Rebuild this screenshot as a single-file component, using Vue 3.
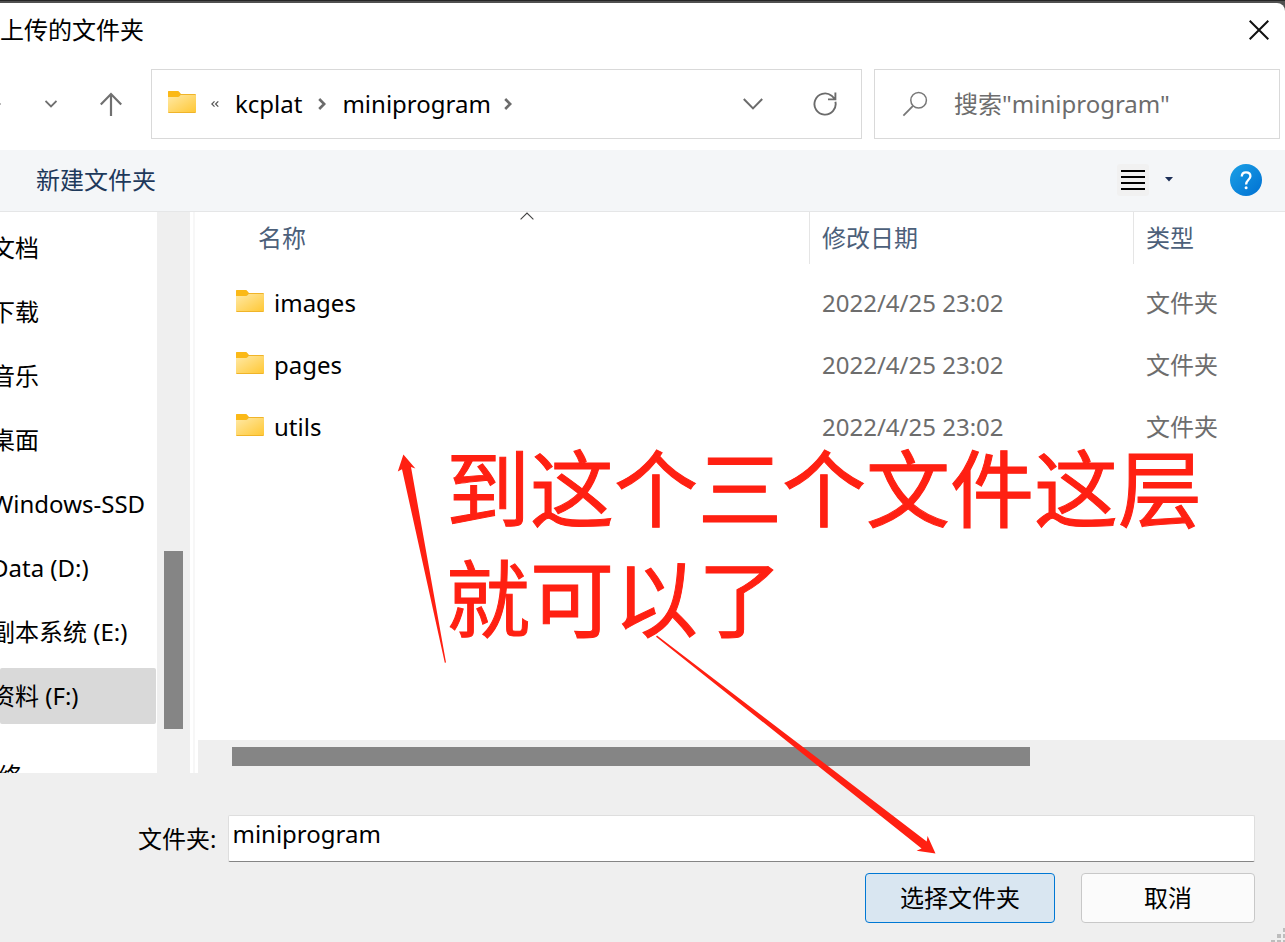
<script setup>
import { ref } from 'vue'

const places = [
  { name: '文档' },
  { name: '下载' },
  { name: '音乐' },
  { name: '桌面' },
  { name: 'Windows-SSD' },
  { name: 'Data (D:)' },
  { name: '副本系统 (E:)' },
  { name: '资料 (F:)', selected: true },
  { name: '网络', root: true },
]

const files = [
  { name: 'images', date: '2022/4/25 23:02', type: '文件夹' },
  { name: 'pages', date: '2022/4/25 23:02', type: '文件夹' },
  { name: 'utils', date: '2022/4/25 23:02', type: '文件夹' },
]

const treeScroll = { start: 60.4, size: 31.8 }
const listScroll = { start: 3.1, size: 73.4 }

const folder = ref('miniprogram')
const query = ref('')
</script>

<template>
  <div class="screen">
    <svg class="defs" width="0" height="0" aria-hidden="true">
      <defs>
        <linearGradient id="folderFill" x1="0" y1="0" x2="1" y2="1">
          <stop offset="0" stop-color="#ffe9a6" />
          <stop offset="1" stop-color="#ffc836" />
        </linearGradient>
        <linearGradient id="helpFill" x1="0" y1="0" x2="1" y2="1">
          <stop offset="0" stop-color="#1ba1e6" />
          <stop offset="1" stop-color="#0070d2" />
        </linearGradient>
        <symbol id="folder" viewBox="0 0 28 22">
          <path d="M0 1.2Q0 0 1.2 0H9Q10 0 10.8 .8L13 3H27Q28 3 28 4V21Q28 22 27 22H1Q0 22 0 21Z" fill="#f0b429" />
          <path d="M0 1.2Q0 0 1.2 0H9.5Q10.4 0 11 .8L12.4 3L11 5.2Q10.4 6 9.5 6H0Z" fill="#fbb917" />
          <path d="M0 6H9.8Q11 6 11.8 5L12.6 4H27.4Q28 4 28 4.6V20.4Q28 21 27.4 21H.6Q0 21 0 20.4Z" fill="url(#folderFill)" />
        </symbol>
      </defs>
    </svg>

    <main class="dialog">
      <header class="titlebar">
        <h1>上传的文件夹</h1>
        <button class="plain" aria-label="关闭">
          <svg width="20" height="20" viewBox="0 0 20 20"><path d="M.7 .7L19.3 19.3M19.3 .7L.7 19.3" stroke="#111" stroke-width="2" fill="none" /></svg>
        </button>
      </header>

      <div class="navbar">
        <nav class="history">
          <button class="plain" aria-label="前进">
            <svg width="2" height="2" viewBox="0 0 2 2"><path d="M0 0H1V2H0Z" fill="#bbb" /></svg>
          </button>
          <button class="plain" aria-label="最近位置">
            <svg width="12" height="8" viewBox="0 0 12 8"><path d="M.5 1L6 6.5L11.5 1" stroke="#707070" stroke-width="1.8" fill="none" /></svg>
          </button>
          <button class="plain" aria-label="上一级">
            <svg width="22" height="24" viewBox="0 0 22 24"><path d="M11 24V2M.8 12.6L11 2L21.2 12.6" stroke="#707070" stroke-width="2.2" fill="none" /></svg>
          </button>
        </nav>
        <div class="address">
          <svg class="folder" width="28" height="22"><use href="#folder" /></svg>
          <svg class="more" width="8" height="6" viewBox="0 0 8 6"><path d="M3.5 .4L.8 3L3.5 5.6M7.3 .4L4.6 3L7.3 5.6" stroke="#555" stroke-width="1.2" fill="none" /></svg>
          <a href="#kcplat">kcplat</a>
          <svg class="sep" width="8" height="12" viewBox="0 0 8 12"><path d="M1.2 1L6.2 6L1.2 11" stroke="#6b6b6b" stroke-width="2.6" fill="none" /></svg>
          <a href="#miniprogram">miniprogram</a>
          <svg class="sep last" width="8" height="12" viewBox="0 0 8 12"><path d="M1.2 1L6.2 6L1.2 11" stroke="#6b6b6b" stroke-width="2.6" fill="none" /></svg>
          <div class="address-actions">
            <button class="plain" aria-label="以前的位置">
              <svg width="20" height="12" viewBox="0 0 20 12"><path d="M.8 1L10 10.4L19.2 1" stroke="#6b6b6b" stroke-width="2" fill="none" /></svg>
            </button>
            <button class="plain" aria-label="刷新">
              <svg width="24" height="24" viewBox="0 0 24 24"><path d="M22.4 9.7A10.6 10.6 0 1 1 18.6 3.7L22 7.2M22.4 .6V7.4H15" stroke="#6b6b6b" stroke-width="1.9" fill="none" /></svg>
            </button>
          </div>
        </div>
        <label class="search">
          <svg width="26" height="26" viewBox="0 0 26 26"><circle cx="16.6" cy="9.2" r="7.8" stroke="#777" stroke-width="1.5" fill="none" /><path d="M11 14.8L1.4 24.6" stroke="#777" stroke-width="1.8" /></svg>
          <input v-model="query" type="search" aria-label="搜索" placeholder="搜索&quot;miniprogram&quot;" />
        </label>
      </div>

      <div class="toolbar">
        <button class="plain new-folder">新建文件夹</button>
        <div class="view-tools">
          <button class="plain view" aria-label="视图">
            <svg width="32" height="32" viewBox="0 0 32 32"><rect width="32" height="32" rx="3" fill="#f1f1f1" /><path d="M4 7H28M4 13H28M4 19H28M4 25H28" stroke="#000" stroke-width="2" /></svg>
          </button>
          <button class="plain view-menu" aria-label="更多选项">
            <svg width="8" height="5" viewBox="0 0 8 5"><path d="M0 0H8L4 4.6Z" fill="#1c2f57" /></svg>
          </button>
          <button class="plain" aria-label="帮助">
            <svg width="32" height="32" viewBox="0 0 32 32"><circle cx="16" cy="16" r="16" fill="url(#helpFill)" /><path d="M11.8 12.6C11.8 9.6 13.6 8.4 16 8.4C18.5 8.4 20.4 9.9 20.4 12.3C20.4 15.6 16.1 16 16.1 20.4" stroke="#fff" stroke-width="2.3" fill="none" /><circle cx="16.1" cy="23.7" r="1.5" fill="#fff" /></svg>
          </button>
        </div>
      </div>

      <div class="content">
        <aside class="tree">
          <ul>
            <li v-for="p in places" :key="p.name" :class="{ selected: p.selected, root: p.root }">
              <a :href="'#' + p.name">{{ p.name }}</a>
            </li>
          </ul>
        </aside>
        <div class="track vertical">
          <div class="thumb" :style="{ top: treeScroll.start + '%', height: treeScroll.size + '%' }"></div>
        </div>
        <div class="splitter"></div>
        <section class="list">
          <table>
            <colgroup>
              <col class="col-name" />
              <col class="col-date" />
              <col />
            </colgroup>
            <thead>
              <tr>
                <th class="name">
                  <div>名称</div>
                  <svg class="sort" width="14" height="8" viewBox="0 0 14 8"><path d="M.6 7.4L7 1L13.4 7.4" stroke="#444" stroke-width="1.1" fill="none" /></svg>
                </th>
                <th><div>修改日期</div></th>
                <th><div>类型</div></th>
              </tr>
            </thead>
            <tbody>
              <tr v-for="f in files" :key="f.name">
                <td class="name">
                  <svg class="folder" width="28" height="22"><use href="#folder" /></svg>
                  <span>{{ f.name }}</span>
                </td>
                <td>{{ f.date }}</td>
                <td>{{ f.type }}</td>
              </tr>
            </tbody>
          </table>
          <div class="track horizontal">
            <div class="thumb" :style="{ left: listScroll.start + '%', width: listScroll.size + '%' }"></div>
          </div>
        </section>
      </div>

      <footer class="footer">
        <div class="field">
          <label for="folder-name">文件夹:</label>
          <input id="folder-name" v-model="folder" type="text" />
        </div>
        <div class="actions">
          <button class="primary">选择文件夹</button>
          <button class="cancel">取消</button>
        </div>
        <svg class="grip" width="14" height="14" viewBox="0 0 14 14"><path d="M12 0h4v4h-4zM6 6h4v4h-4zM12 6h4v4h-4zM0 12h4v4h-4zM6 12h4v4h-4zM12 12h4v4h-4z" fill="#bdbdbd" /></svg>
      </footer>
    </main>

    <p class="note">到这个三个文件这层<br />就可以了</p>
    <svg class="arrows" width="1285" height="942" viewBox="0 0 1285 942" aria-hidden="true">
      <g fill="#ff2012">
        <path d="M403.4 454.6L415.4 468.4L411 467L446 662.4L444.8 662.8L402 469.2L397.8 471.4Z" />
        <path d="M935.5 853.6L927.6 836L926.7 841.4L657 635.6L656 636.8L921.6 848.6L916.6 850.8Z" />
      </g>
    </svg>
  </div>
</template>

<style>
body {
  margin: 0;
  overflow: hidden;
}
</style>

<style scoped>
* {
  box-sizing: border-box;
}
.screen {
  position: relative;
  display: flex;
  flex-direction: column;
  height: 100vh;
  overflow: hidden;
  padding-top: 3px;
  background: linear-gradient(#262626 1px, #505050 1px);
  color: #000;
  font: 24px/32px "Noto Sans", "Noto Sans CJK SC", sans-serif;
}
.defs {
  position: absolute;
}
.dialog {
  flex: 1;
  display: flex;
  flex-direction: column;
  min-height: 0;
  background: #fff;
  border-top-right-radius: 8px;
}
svg {
  display: block;
  flex: none;
}
a {
  color: inherit;
  text-decoration: none;
}
button,
input {
  font: inherit;
  color: inherit;
}
.plain {
  display: block;
  padding: 0;
  border: 0;
  background: none;
}
.folder {
  margin-bottom: 4px;
}
.titlebar {
  display: flex;
  align-items: center;
  justify-content: space-between;
  height: 54px;
  padding-right: 16px;
}
.titlebar h1 {
  margin: 0;
  font-size: 24px;
  font-weight: 400;
}
.navbar {
  display: flex;
  gap: 12px;
  padding: 12px 5px 11px 0;
}
.history {
  display: flex;
  align-items: center;
  gap: 43px;
  width: 139px;
}
.address,
.search {
  display: flex;
  align-items: center;
  height: 70px;
  border: 1px solid #d9d9d9;
}
.address {
  flex: 1;
  padding: 0 24px 0 16px;
}
.address .more {
  margin: 0 16px 0 15px;
}
.address .sep {
  margin: 0 16px;
}
.address .sep.last {
  margin-left: 13px;
}
.address-actions {
  display: flex;
  align-items: center;
  gap: 50px;
  margin-left: auto;
}
.search {
  width: 406px;
  padding-left: 27px;
  gap: 26px;
}
.search input {
  flex: 1;
  min-width: 0;
  padding: 0;
  border: 0;
  outline: 0;
  background: none;
  appearance: none;
}
.search input::placeholder {
  color: #6d6d6d;
  opacity: 1;
}
.toolbar {
  display: flex;
  align-items: center;
  justify-content: space-between;
  height: 62px;
  padding: 0 23px 2px 36px;
  border-bottom: 1px solid #e5e6e7;
  background: #f4f6f8;
}
.new-folder {
  color: #1e395b;
}
.view-tools {
  display: flex;
  align-items: center;
}
.view-menu {
  margin: 0 57px 0 16px;
}
.content {
  flex: 1;
  display: flex;
  min-height: 0;
}
.tree {
  width: 157px;
  padding: 8px 1px 0 0;
  overflow: hidden;
}
.tree ul {
  display: flex;
  flex-direction: column;
  gap: 8px;
  margin: 0;
  padding: 0;
  list-style: none;
}
.tree li {
  padding: 12px 0;
  border-radius: 2px;
  white-space: nowrap;
}
.tree li a {
  display: block;
  margin-left: -9px;
}
.tree li.selected {
  background: #d9d9d9;
}
.tree li.root {
  margin-top: 16px;
}
.tree li.root a {
  margin-left: -26px;
}
.track {
  position: relative;
  background: #efefef;
}
.thumb {
  position: absolute;
  background: #858585;
}
.vertical {
  width: 33px;
}
.vertical .thumb {
  left: 7px;
  right: 7px;
}
.horizontal {
  height: 33px;
}
.horizontal .thumb {
  top: 7px;
  bottom: 7px;
}
.splitter {
  width: 8px;
  border: solid #fff;
  border-width: 0 3px;
  background: #f7f7f7;
}
.list {
  flex: 1;
  display: flex;
  flex-direction: column;
  justify-content: space-between;
  min-width: 0;
}
table {
  width: 100%;
  table-layout: fixed;
  border-collapse: collapse;
}
.col-name {
  width: 612px;
}
.col-date {
  width: 324px;
}
th {
  position: relative;
  height: 60px;
  padding: 0;
  color: #4c607a;
  font-weight: 400;
  text-align: left;
  vertical-align: top;
}
th div {
  height: 52px;
  padding: 10px 12px;
  border-right: 1px solid #e5e5e5;
}
th.name div {
  padding-left: 60px;
}
th:last-child div {
  border-right: 0;
}
.sort {
  position: absolute;
  top: 0;
  left: 322px;
}
td {
  height: 62px;
  padding: 0 12px;
  color: #6d6d6d;
}
td.name {
  display: flex;
  align-items: center;
  gap: 10px;
  padding-left: 38px;
  color: #000;
}
.footer {
  position: relative;
  display: flex;
  flex-direction: column;
  gap: 11px;
  padding: 42px 30px 19px 138px;
  background: #efefef;
}
.field {
  display: flex;
  align-items: center;
  gap: 12px;
}
.field input {
  flex: 1;
  min-width: 0;
  height: 47px;
  padding: 0 3px 10px;
  border: 1px solid #dedede;
  border-bottom-color: #858585;
  border-radius: 2px;
  outline: 0;
  background: #fff;
}
.actions {
  display: flex;
  justify-content: flex-end;
  gap: 26px;
}
.actions button {
  height: 50px;
  padding: 0;
  border: 1px solid #c8c8c8;
  border-radius: 4px;
  background: #fbfbfb;
}
.actions .primary {
  width: 190px;
  border-color: #0078d4;
  background: #d9e6f1;
}
.actions .cancel {
  width: 174px;
}
.grip {
  position: absolute;
  right: 0;
  bottom: 0;
}
.note {
  position: absolute;
  top: 434px;
  left: 446px;
  margin: 0;
  color: #ff2012;
  font-size: 84px;
  line-height: 110px;
  white-space: nowrap;
  -webkit-text-stroke: 1px #ff2012;
}
.arrows {
  position: absolute;
  top: 0;
  left: 0;
  pointer-events: none;
}
</style>
